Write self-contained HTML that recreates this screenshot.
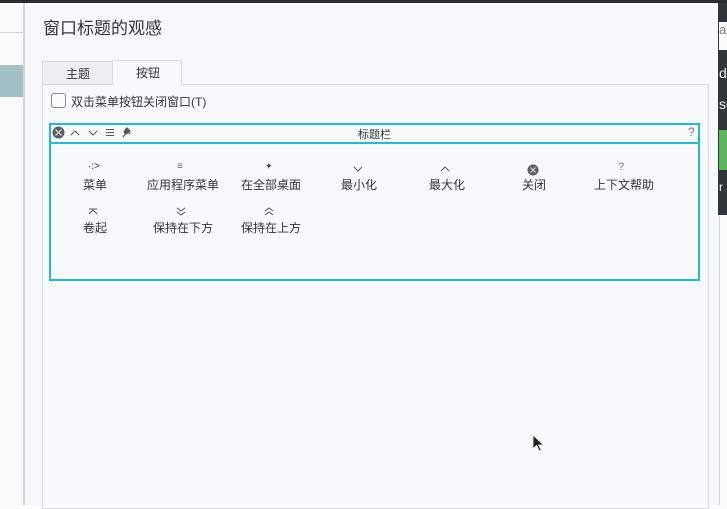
<!DOCTYPE html>
<html><head><meta charset="utf-8"><style>
*{margin:0;padding:0;box-sizing:border-box}
body{width:727px;height:505px;overflow:hidden;background:#fcfcfc;position:relative;font-family:"Liberation Sans","Noto Sans CJK SC",sans-serif;color:#31363b}
.a{position:absolute}
.t{font-size:12px;color:#31363b;white-space:nowrap}
svg{display:block}
</style></head><body>
<div class="a" style="left:0;top:0;width:727px;height:3px;background:#2a2e32"></div>
<div class="a" style="left:0;top:32px;width:24px;height:1px;background:#d0d3d6"></div>
<div class="a" style="left:0;top:65px;width:24px;height:32px;background:#a4c2c5"></div>
<div class="a" style="left:23px;top:3px;width:2px;height:502px;background:#d4d6d9"></div>
<div class="a" style="left:25px;top:3px;width:694px;height:502px;background:#f8f9fb"></div>
<div class="a" style="left:718px;top:3px;width:9px;height:212px;background:#31363b"></div>
<div class="a" style="left:719px;top:22px;width:8px;height:28px;background:#fcfcfc;font-size:13px;color:#777;overflow:hidden">ac</div>
<div class="a" style="left:719px;top:65px;font-size:14px;color:#eee">d</div>
<div class="a" style="left:719px;top:96px;font-size:14px;color:#eee">so</div>
<div class="a" style="left:719px;top:130px;width:8px;height:40px;background:#5cb85c"></div>
<div class="a" style="left:719px;top:180px;font-size:12px;color:#eee">r</div>
<div class="a" style="left:719px;top:215px;width:1px;height:290px;background:#d4d6d9"></div>
<div class="a" style="left:43px;top:14px;font-size:17px;color:#31363b">窗口标题的观感</div>
<div class="a" style="left:42px;top:61px;width:71px;height:23px;background:#eceef0;border:1px solid #d8dadd;border-bottom:none"></div>
<div class="a t" style="left:66px;top:65px;font-size:12px">主题</div>
<div class="a" style="left:112px;top:60px;width:70px;height:25px;background:#f8f9fb;border:1px solid #d8dadd;border-bottom:none"></div>
<div class="a t" style="left:136px;top:64px;font-size:12px">按钮</div>
<div class="a" style="left:42px;top:84px;width:667px;height:425px;border:1px solid #d8dadd;border-top:none"></div>
<div class="a" style="left:42px;top:84px;width:70px;height:1px;background:#d8dadd"></div>
<div class="a" style="left:182px;top:84px;width:527px;height:1px;background:#d8dadd"></div>
<div class="a" style="left:51px;top:93px;width:15px;height:15px;border:1px solid #8a8e92;border-radius:3px;background:#fcfcfc"></div>
<div class="a t" style="left:71px;top:93px;font-size:12px">双击菜单按钮关闭窗口(T)</div>
<div class="a" style="left:49px;top:123px;width:651px;height:158px;border:2px solid #1fbcd3;background:#f8f9fb"></div>
<div class="a" style="left:51px;top:142px;width:647px;height:2px;background:#1fbcd3"></div>
<svg class="a" style="left:52px;top:126px" width="80" height="14" viewBox="0 0 80 14">
<circle cx="6.5" cy="6.5" r="6" fill="#5a5e62"/><path d="M3.5 3.5l6 6M9.5 3.5l-6 6" stroke="#d0d2d4" stroke-width="1.3"/>
<path d="M19 9l4-4 4 4" fill="none" stroke="#555" stroke-width="1"/>
<path d="M37 5l4 4 4-4" fill="none" stroke="#555" stroke-width="1"/>
<path d="M54 3.5h8M54 6.5h8M54 9.5h8" stroke="#555" stroke-width="1"/>
<path d="M73 3l5 5M75 2l3 3-4 3-2-2zM74 7l-3 4" stroke="#555" stroke-width="1.2" fill="#555"/>
</svg>
<div class="a t" style="left:358px;top:126px;font-size:11px">标题栏</div>
<div class="a t" style="left:688px;top:125px;font-size:12px;color:#777">?</div>
<div class="a t" style="left:88px;top:161px;font-size:10px">·:&gt;</div>
<div class="a t" style="left:83px;top:176px">菜单</div>
<div class="a t" style="left:177px;top:161px;font-size:10px;color:#666">≡</div>
<div class="a t" style="left:147px;top:176px">应用程序菜单</div>
<div class="a t" style="left:265px;top:161px;font-size:9px;color:#444">✦</div>
<div class="a t" style="left:241px;top:176px">在全部桌面</div>
<svg class="a" style="left:353px;top:166px" width="10" height="6"><path d="M1 1l4 4 4-4" fill="none" stroke="#555"/></svg>
<div class="a t" style="left:341px;top:176px">最小化</div>
<svg class="a" style="left:440px;top:166px" width="10" height="6"><path d="M1 5l4-4 4 4" fill="none" stroke="#555"/></svg>
<div class="a t" style="left:429px;top:176px">最大化</div>
<svg class="a" style="left:527px;top:164px" width="12" height="12"><circle cx="6" cy="6" r="5.5" fill="#5a5e62"/><path d="M3.5 3.5l5 5M8.5 3.5l-5 5" stroke="#d0d2d4" stroke-width="1.2"/></svg>
<div class="a t" style="left:522px;top:176px">关闭</div>
<div class="a t" style="left:618px;top:161px;font-size:11px;color:#777">?</div>
<div class="a t" style="left:594px;top:176px">上下文帮助</div>
<svg class="a" style="left:88px;top:208px" width="10" height="7"><path d="M1 1h8M1 6l4-4 4 4" fill="none" stroke="#555"/></svg>
<div class="a t" style="left:83px;top:219px">卷起</div>
<svg class="a" style="left:176px;top:207px" width="10" height="9"><path d="M1 1l4 3 4-3M1 5l4 3 4-3" fill="none" stroke="#555"/></svg>
<div class="a t" style="left:153px;top:219px">保持在下方</div>
<svg class="a" style="left:264px;top:207px" width="10" height="9"><path d="M1 4l4-3 4 3M1 8l4-3 4 3" fill="none" stroke="#555"/></svg>
<div class="a t" style="left:241px;top:219px">保持在上方</div>
<svg class="a" style="left:532px;top:434px" width="12" height="18"><path d="M1 1v14l3.5-3.5 3 5.5 2-1-3-5h5z" fill="#222" stroke="#fff" stroke-width="0.8"/></svg>
</body></html>
